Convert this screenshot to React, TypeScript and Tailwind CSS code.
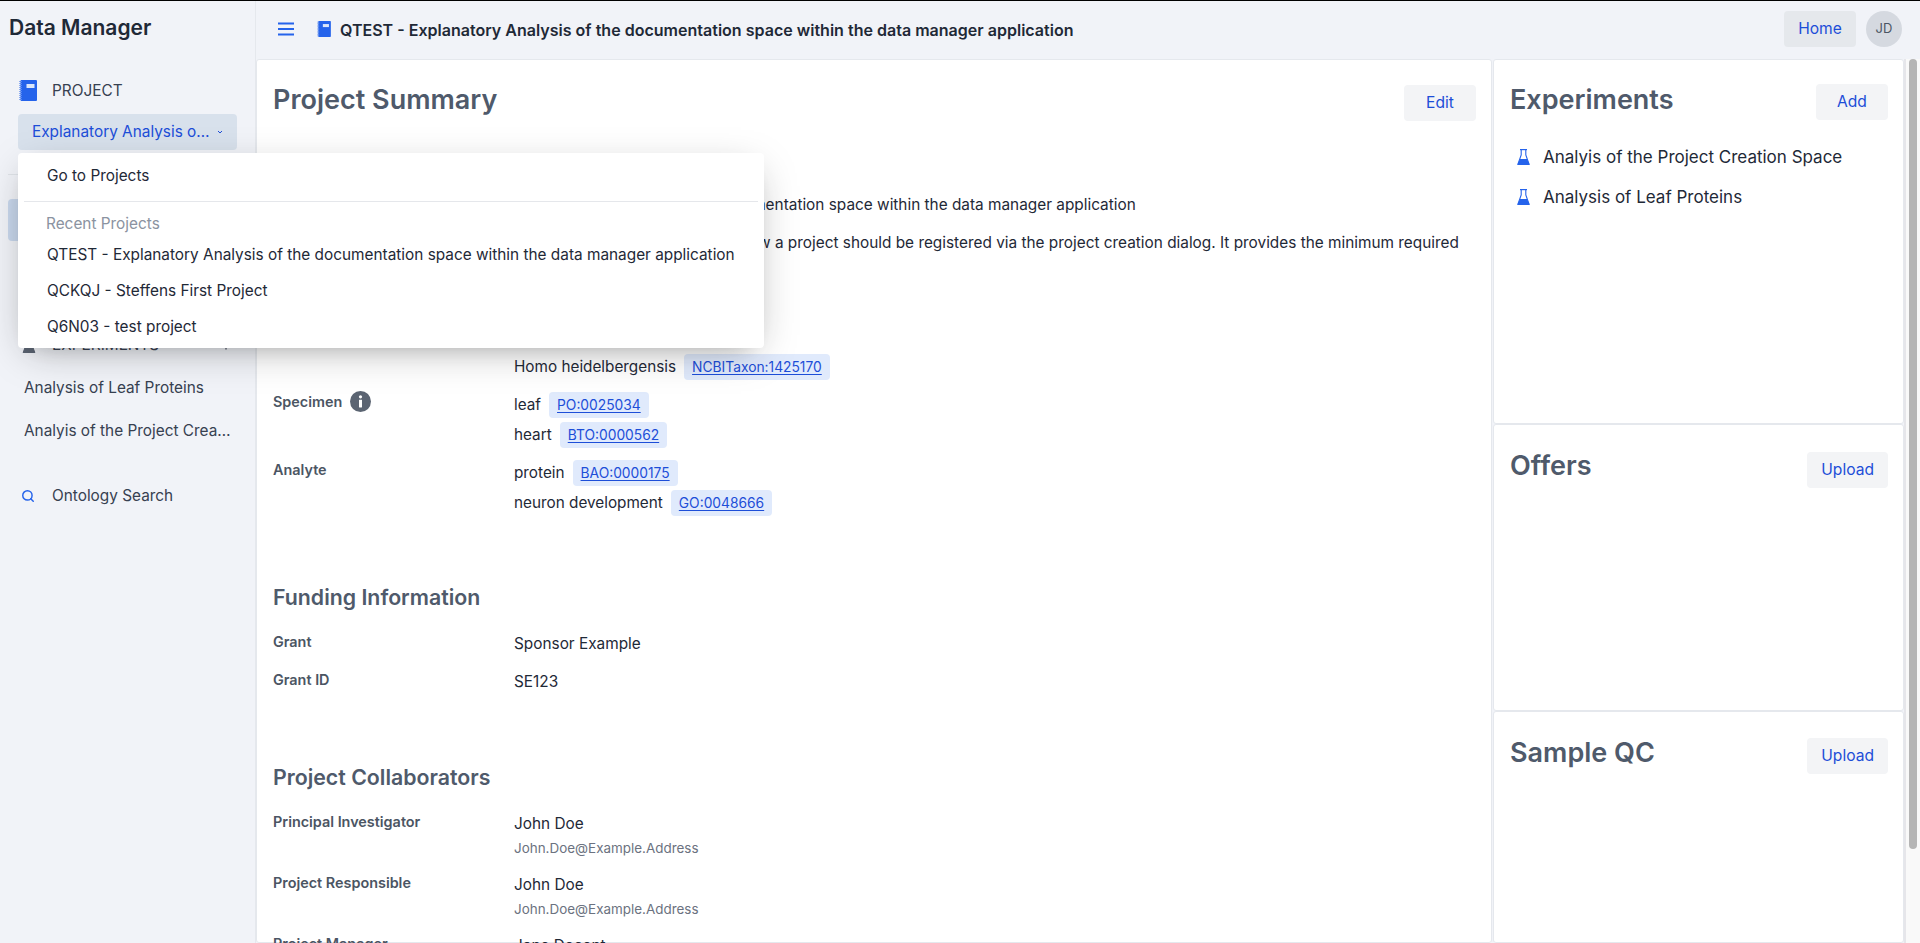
import React from "react";
import { Search, Plus } from "lucide-react";

function Notebook({ className }: { className: string }) {
  return (
    <svg viewBox="0 0 18 21" className={className} aria-hidden="true">
      <rect x="1.5" y="0" width="16.5" height="21" rx="1" fill="#2563eb" />
      <rect x="7.5" y="4" width="8" height="4" fill="#dbe6fb" />
      <path d="M0.5 1.5h2M0.5 3.5h2M0.5 5.5h2M0.5 7.5h2M0.5 9.5h2M0.5 11.5h2M0.5 13.5h2M0.5 15.5h2M0.5 17.5h2M0.5 19.5h2" stroke="#2563eb" strokeWidth="1" />
      <path d="M2 1v19" stroke="#dbe6fb" strokeWidth="0.6" strokeDasharray="1 1" />
    </svg>
  );
}

function Flask({ className, color }: { className: string; color: string }) {
  return (
    <svg viewBox="0 0 13 16" className={className} aria-hidden="true">
      <path d="M3 0.6h7" stroke={color} strokeWidth="1.2" fill="none" />
      <path d="M4.2 1v5L1 15h11L8.8 6V1" stroke={color} strokeWidth="1.1" fill="none" />
      <path d="M3 10h7L12.8 16H0.2z" fill={color} />
    </svg>
  );
}

function Info() {
  return (
    <svg viewBox="0 0 21 21" className="w-[21px] h-[21px]" aria-hidden="true">
      <circle cx="10.5" cy="10.5" r="10.5" fill="#5b6472" />
      <circle cx="10.5" cy="5.8" r="1.6" fill="#fff" />
      <rect x="9" y="8.7" width="3" height="7.8" rx="0.4" fill="#fff" />
    </svg>
  );
}

function Tag({ children }: { children: React.ReactNode }) {
  return (
    <span className="h-[26px] inline-flex items-center px-2 rounded-[4px] bg-[#e0eafc] text-[13.8px] text-[#1d4ed8] underline underline-offset-2">
      {children}
    </span>
  );
}

function Btn({ children }: { children: React.ReactNode }) {
  return (
    <button className="h-9 px-[14px] min-w-[72px] rounded-[4px] bg-[#f3f4f6] text-[15.6px] text-[#1d4ed8] flex items-center justify-center">
      {children}
    </button>
  );
}

function TermRow({ term, id }: { term: string; id: string }) {
  return (
    <div className="flex items-center gap-2 h-[26px] text-[15.3px] text-[#1f2937]">
      <span>{term}</span>
      <Tag>{id}</Tag>
    </div>
  );
}

function Label({ children }: { children: React.ReactNode }) {
  return <div className="text-[14.4px] font-semibold leading-5 text-[#4b5563]">{children}</div>;
}

function Person({ role, name, mail }: { role: string; name: string; mail: string }) {
  return (
    <div className="grid grid-cols-[241px_1fr] mt-[15px] first:mt-[21px]">
      <Label>{role}</Label>
      <div>
        <div className="text-[15.36px] leading-6 text-[#1f2937]">{name}</div>
        <div className="mt-[2px] text-[13.44px] leading-5 text-[#6b7280]">{mail}</div>
      </div>
    </div>
  );
}

function SideCard({ title, action, className, titleClass, children }: { title: string; action: string; className: string; titleClass: string; children?: React.ReactNode }) {
  return (
    <section className={`bg-white border border-[#e5e8ed] rounded-[3px] pl-4 pr-[15px] ${className}`}>
      <div className="flex justify-between items-start">
        <h2 className={`text-[27px] leading-9 font-semibold text-[#4f5a6b] ${titleClass}`}>{title}</h2>
        <Btn>{action}</Btn>
      </div>
      {children}
    </section>
  );
}

export default function App() {
  return (
    <div
      className="relative h-[943px] w-full overflow-hidden flex bg-[#f1f3f8] border-t border-black text-[#1f2937]"
      style={{ fontFamily: "Inter, 'Liberation Sans', sans-serif" }}
    >
      <aside className="w-[256px] shrink-0 border-r border-[#e5e8ed] flex flex-col">
        <div className="pl-[9px] h-[53px] flex items-center text-[21px] font-semibold text-[#1f2937]">Data Manager</div>
        <div className="mt-[26px] flex items-center pl-[19px] h-[21px]">
          <Notebook className="w-[18px] h-[21px]" />
          <span className="ml-[15px] text-[15.36px] text-[#374151]">PROJECT</span>
        </div>
        <div className="mt-[13px] mx-[18px] h-9 rounded-[4px] bg-[#d8e1ec] flex items-center pl-[14px] text-[15.36px] text-[#1d4ed8]">
          <span className="truncate w-[183px] shrink-0">Explanatory Analysis of the documentation space</span>
          <svg viewBox="0 0 8 8" className="ml-px w-2 h-2" aria-hidden="true">
            <path d="M2 3l2 2 2-2" stroke="#1d4ed8" fill="none" strokeWidth="1" />
          </svg>
        </div>
        <div className="mt-[24px] mx-2 border-t border-[#dfe3e8]" />
        <div className="mt-6 mx-2 h-[42px] rounded-[4px] bg-[#c8d7ec]" />
        <div className="mt-[94px] flex items-center h-5 pl-[21px] pr-[22px]">
          <Flask className="w-4 h-4" color="#5b6472" />
          <span className="ml-[15px] text-[15.36px] text-[#374151] flex-1">EXPERIMENTS</span>
          <Plus className="w-[14px] h-[14px] text-[#374151]" />
        </div>
        <div className="mt-[21px] pl-6 h-6 flex items-center text-[15.36px] text-[#374151]">Analysis of Leaf Proteins</div>
        <div className="mt-[19px] pl-6 pr-6 h-6 flex items-center text-[15.36px] text-[#374151]">
          <span className="truncate">Analyis of the Project Creation Space</span>
        </div>
        <div className="mt-[41px] pl-[21px] h-6 flex items-center text-[15.36px] text-[#374151]">
          <Search className="w-[14px] h-[14px] text-[#2563eb]" strokeWidth={2.5} />
          <span className="ml-[17px]">Ontology Search</span>
        </div>
      </aside>

      <div className="flex-1 min-w-0 flex flex-col">
        <header className="h-[58px] shrink-0 flex items-center pl-[22px] pr-[18px] pb-[2px]">
          <svg viewBox="0 0 16 14" className="w-4 h-[14px]" aria-hidden="true">
            <path d="M0 1.5h16M0 7h16M0 12.5h16" stroke="#2563eb" strokeWidth="2" />
          </svg>
          <Notebook className="ml-[23px] w-[14px] h-4" />
          <span className="ml-[9px] mt-[2px] text-[16.05px] font-semibold text-[#1f2937]">
            QTEST - Explanatory Analysis of the documentation space within the data manager application
          </span>
          <div className="ml-auto flex items-center gap-[10px]">
            <button className="h-9 w-[72px] rounded-[4px] bg-[#e5e8ec] text-[15.6px] text-[#1d4ed8]">Home</button>
            <div className="w-9 h-9 rounded-full bg-[#d5d9e0] flex items-center justify-center text-[13px] text-[#4b5563]">JD</div>
          </div>
        </header>

        <div className="flex-1 min-h-0 flex">
          <main className="w-[1236px] shrink-0 bg-white border border-[#e5e8ed] rounded-[3px] pl-4 pr-[15px] pt-[25px]">
            <div className="flex justify-between items-start">
              <h1 className="text-[27px] leading-9 font-semibold text-[#4f5a6b] -mt-[3px]">Project Summary</h1>
              <Btn>Edit</Btn>
            </div>

            <div className="mt-[72px] pl-[241px] text-[15.36px] leading-6">
              <p>Explanatory Analysis of the documentation space within the data manager application</p>
              <p className="mt-[14px]">
                This project documents in part how a project should be registered via the project creation dialog. It provides the minimum required
                <br />
                information.
              </p>
            </div>

            <div className="mt-[75px] pl-[241px]">
              <TermRow term="Homo heidelbergensis" id="NCBITaxon:1425170" />
            </div>

            <div className="mt-3 grid grid-cols-[241px_1fr]">
              <div className="flex items-center gap-2 h-[21px] -mt-px">
                <Label>Specimen</Label>
                <Info />
              </div>
              <div className="flex flex-col gap-1">
                <TermRow term="leaf" id="PO:0025034" />
                <TermRow term="heart" id="BTO:0000562" />
              </div>
            </div>

            <div className="mt-3 grid grid-cols-[241px_1fr]">
              <Label>Analyte</Label>
              <div className="flex flex-col gap-1">
                <TermRow term="protein" id="BAO:0000175" />
                <TermRow term="neuron development" id="GO:0048666" />
              </div>
            </div>

            <h3 className="mt-[67px] text-[21.3px] leading-7 font-semibold text-[#4f5a6b]">Funding Information</h3>
            <div className="mt-[21px] grid grid-cols-[241px_1fr] gap-y-[14px] text-[15.36px] leading-6">
              <Label>Grant</Label>
              <div>Sponsor Example</div>
              <Label>Grant ID</Label>
              <div>SE123</div>
            </div>

            <h3 className="mt-[69px] text-[21.3px] leading-7 font-semibold text-[#4f5a6b]">Project Collaborators</h3>
            <div>
              <Person role="Principal Investigator" name="John Doe" mail="John.Doe@Example.Address" />
              <Person role="Project Responsible" name="John Doe" mail="John.Doe@Example.Address" />
              <Person role="Project Manager" name="Jane Decent" mail="Jane.Decent@Example.Address" />
            </div>
          </main>

          <div className="w-[412px] shrink-0 flex flex-col pl-[1px]">
            <SideCard title="Experiments" action="Add" titleClass="-mt-[2px]" className="h-[365px] pt-[24px]">
              <ul className="mt-[25px] flex flex-col gap-[16px] text-[17px] leading-6 text-[#1f2937]">
                <li className="flex items-center pl-[7px]">
                  <Flask className="w-[13px] h-4" color="#2563eb" />
                  <span className="ml-[13px]">Analyis of the Project Creation Space</span>
                </li>
                <li className="flex items-center pl-[7px]">
                  <Flask className="w-[13px] h-4" color="#2563eb" />
                  <span className="ml-[13px]">Analysis of Leaf Proteins</span>
                </li>
              </ul>
            </SideCard>
            <SideCard title="Offers" action="Upload" titleClass="-mt-[4px]" className="h-[287px] pt-[27px]" />
            <SideCard title="Sample QC" action="Upload" titleClass="-mt-[3px]" className="flex-1 pt-[26px]" />
          </div>

          <div className="flex-1 bg-[#f9f9f9] border-l-2 border-[#e6e6ea] pl-[3px] pr-[3px]">
            <div className="h-[790px] rounded-full bg-[#b5b5b5]" />
          </div>
        </div>
      </div>

      <div className="absolute left-[18px] top-[152px] w-[746px] h-[195px] bg-white rounded-[4px] shadow-[0_10px_38px_-10px_rgba(22,23,24,0.35),0_10px_20px_-15px_rgba(22,23,24,0.2)] px-[6px] pt-[5px] text-[15.36px] text-[#1f2937]">
        <div className="h-9 flex items-center pl-[23px]">Go to Projects</div>
        <div className="mt-[7px] mb-[10px] border-t border-[#e5e7eb]" />
        <div className="h-6 flex items-center pl-[22px] text-[15.36px] text-[#8b93a1]">Recent Projects</div>
        <div className="mt-px h-9 flex items-center pl-[23px]">QTEST - Explanatory Analysis of the documentation space within the data manager application</div>
        <div className="h-9 flex items-center pl-[23px]">QCKQJ - Steffens First Project</div>
        <div className="h-9 flex items-center pl-[23px]">Q6N03 - test project</div>
      </div>
    </div>
  );
}
